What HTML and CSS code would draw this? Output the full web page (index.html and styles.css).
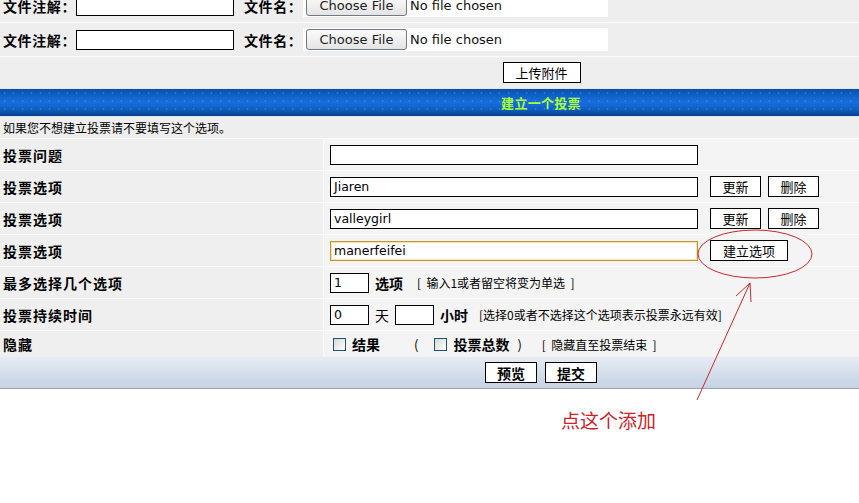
FILE: index.html
```html
<!DOCTYPE html>
<html lang="zh-CN">
<head>
<meta charset="utf-8">
<title>发表新帖 - 投票</title>
<link rel="stylesheet" href="styles.css">
</head>
<body>
<div class="page">
  <div class="upload">
    <div class="frow">
      <span class="flabel">文件注解：</span>
      <span class="text-in wide-note"></span>
      <span class="flabel fname">文件名：</span>
      <span class="filebox"><span class="choose">Choose File</span><span class="nofile">No file chosen</span></span>
    </div>
    <div class="frow">
      <span class="flabel">文件注解：</span>
      <span class="text-in wide-note"></span>
      <span class="flabel fname">文件名：</span>
      <span class="filebox"><span class="choose">Choose File</span><span class="nofile">No file chosen</span></span>
    </div>
    <div class="frow center short">
      <span class="btn">上传附件</span>
    </div>
  </div>

  <div class="bar">建立一个投票</div>

  <div class="poll">
    <div class="notice">如果您不想建立投票请不要填写这个选项。</div>

    <div class="lab">投票问题</div>
    <div class="val"><span class="text-in long"></span></div>

    <div class="lab">投票选项</div>
    <div class="val"><span class="text-in long">Jiaren</span><span class="btn sm">更新</span><span class="btn sm">删除</span></div>

    <div class="lab">投票选项</div>
    <div class="val"><span class="text-in long">valleygirl</span><span class="btn sm">更新</span><span class="btn sm">删除</span></div>

    <div class="lab">投票选项</div>
    <div class="val"><span class="text-in long focus">manerfeifei</span><span class="btn add">建立选项</span></div>

    <div class="lab">最多选择几个选项</div>
    <div class="val"><span class="text-in tiny">1</span><b class="unit">选项</b><span class="hint spaced">[&nbsp;&nbsp;输入1或者留空将变为单选&nbsp;&nbsp;]</span></div>

    <div class="lab">投票持续时间</div>
    <div class="val"><span class="text-in tiny">0</span><span class="unit plain">天</span><span class="text-in tiny"></span><b class="unit">小时</b><span class="hint tight">[选择0或者不选择这个选项表示投票永远有效]</span></div>

    <div class="lab">隐藏</div>
    <div class="val"><span class="check"></span><b class="unit">结果</b><span class="paren open">(</span><span class="check"></span><b class="unit">投票总数</b><span class="paren">)</span><span class="hint wide">[&nbsp;&nbsp;隐藏直至投票结束&nbsp;&nbsp;]</span></div>
  </div>

  <div class="foot">
    <span class="btn strong">预览</span>
    <span class="btn strong">提交</span>
  </div>
</div>

<svg class="mark" width="859" height="503" viewBox="0 0 859 503">
  <ellipse cx="755" cy="254" rx="57" ry="24" />
  <line x1="697" y1="400" x2="750" y2="283" />
  <line x1="750" y1="283" x2="736" y2="296" />
  <line x1="750" y1="283" x2="751" y2="302" />
</svg>
<div class="tip">点这个添加</div>
</body>
</html>
```

FILE: styles.css
```css
html, body {
  margin: 0;
  padding: 0;
  overflow: hidden;
  background: #fff;
}

body {
  position: relative;
  width: 859px;
  height: 503px;
  font-family: "Noto Sans CJK SC", "DejaVu Sans", sans-serif;
  font-size: 12px;
  color: #000;
}

/* the form table is wider than the window; its right part is scrolled off */
.page {
  width: 1082px;
  margin-top: -11px;
}

/* attachment rows */
.upload {
  display: flex;
  flex-direction: column;
  gap: 1px;
  background: #fbfbfb;
}

.frow {
  height: 33px;
  display: flex;
  align-items: center;
  background: #eeeeee;
}

.frow.center {
  justify-content: center;
}

.frow.short {
  height: 31px;
}

.flabel {
  font-size: 14px;
  font-weight: bold;
  letter-spacing: 0.6px;
  line-height: 16px;
  padding-left: 3px;
  width: 70px;
  flex: none;
  white-space: nowrap;
}

.flabel.fname {
  padding-left: 10px;
  width: 59px;
}

.text-in {
  box-sizing: border-box;
  height: 20px;
  border: 1px solid #000;
  background: #fff;
  display: inline-flex;
  align-items: center;
  padding-left: 3px;
  font-family: "DejaVu Sans", sans-serif;
  font-size: 12.5px;
  flex: none;
}

.wide-note {
  width: 158px;
  margin-left: 3px;
}

.filebox {
  width: 305px;
  height: 23px;
  background: #fff;
  display: flex;
  align-items: center;
  font-family: "DejaVu Sans", sans-serif;
  font-size: 13px;
}

.choose {
  box-sizing: border-box;
  width: 101px;
  height: 21px;
  margin-left: 3px;
  border: 1px solid #6f7a86;
  border-radius: 3px;
  background: linear-gradient(#fbfbfb, #e4e4e4);
  display: inline-flex;
  align-items: center;
  justify-content: center;
  color: #222;
}

.nofile {
  margin-left: 3px;
  color: #111;
}

/* plain bordered buttons */
.btn {
  box-sizing: border-box;
  display: inline-flex;
  align-items: center;
  justify-content: center;
  height: 21px;
  border: 1px solid #000;
  background: #fff;
  font-size: 13px;
  line-height: 1;
  flex: none;
}

.frow .btn {
  width: 78px;
  margin-left: 1px;
}

/* section heading */
.bar {
  box-sizing: border-box;
  height: 29px;
  border-top: 1px solid #d9eaf3;
  border-bottom: 1px solid #dbe8f0;
  display: flex;
  align-items: center;
  justify-content: center;
  color: #aaff33;
  font-size: 13px;
  font-weight: bold;
  letter-spacing: 0.3px;
  background-color: #1062c8;
  background-image:
    radial-gradient(circle, rgba(120, 180, 255, 0.3) 0.7px, transparent 1.2px),
    linear-gradient(#0a4fa8 0%, #1164cc 30%, #176fdd 50%, #0f5fc4 75%, #083f8e 100%);
  background-size: 9px 8px, 100% 100%;
}

/* poll form */
.poll {
  display: grid;
  grid-template-columns: 323px 1fr;
  grid-template-rows: 21px repeat(6, 31px) 26px;
  row-gap: 1px;
  column-gap: 1px;
  background: #fbfbfb;
}

.notice {
  grid-column: 1 / -1;
  background: #eeeeee;
  display: flex;
  align-items: center;
  padding-left: 3px;
  font-size: 12px;
}

.lab {
  background: #efefef;
  display: flex;
  align-items: center;
  padding-left: 3px;
  box-sizing: border-box;
  font-size: 14px;
  font-weight: bold;
  letter-spacing: 1px;
}

.val {
  background: #f4f4f4;
  display: flex;
  align-items: center;
  padding-left: 6px;
}

.long {
  width: 368px;
}

.text-in.focus {
  border-color: #c8952c;
  box-shadow: inset 0 0 0 1px #f6e2b2;
}

.btn.sm {
  width: 51px;
  margin-left: 12px;
}

.btn.sm + .btn.sm {
  margin-left: 7px;
}

.btn.add {
  width: 78px;
  margin-left: 12px;
}

.tiny {
  width: 39px;
}

.unit {
  font-size: 14px;
  margin-left: 6px;
  margin-right: 6px;
  white-space: nowrap;
}

.unit.plain {
  font-weight: normal;
}

.hint {
  font-size: 12px;
  white-space: nowrap;
}

.hint.spaced {
  margin-left: 8px;
}

.hint.tight {
  margin-left: 5px;
}

.hint.wide {
  margin-left: 20px;
}

.check {
  box-sizing: border-box;
  width: 13px;
  height: 13px;
  border: 1px solid #1c5180;
  background: linear-gradient(135deg, #d8d8d2, #ffffff);
  margin-left: 3px;
  flex: none;
}

.paren {
  font-size: 13px;
  margin-left: 2px;
}

.paren.open {
  margin-left: 28px;
  margin-right: 13px;
}

/* submit strip */
.foot {
  height: 31px;
  border-bottom: 1px solid #9ea4aa;
  display: flex;
  align-items: center;
  justify-content: center;
  gap: 8px;
  background: linear-gradient(#e6ecf3 0%, #cdd8e7 75%, #c6d2e3 100%);
}

.btn.strong {
  width: 52px;
  font-weight: bold;
  font-size: 14px;
}

/* red hand-drawn annotation */
.mark {
  position: absolute;
  left: 0;
  top: 0;
  pointer-events: none;
}

.mark ellipse,
.mark line {
  fill: none;
  stroke: #c8282c;
  stroke-width: 1;
}

.tip {
  position: absolute;
  left: 561px;
  top: 409px;
  font-size: 19px;
  line-height: 22px;
  color: #cc2228;
}
```
